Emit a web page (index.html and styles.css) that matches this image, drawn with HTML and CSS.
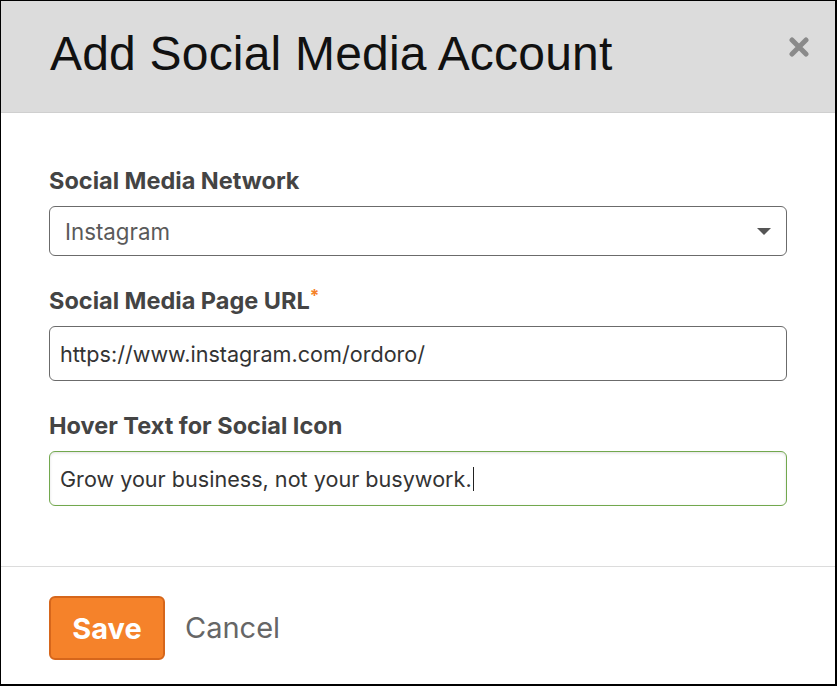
FILE: index.html
```html
<!DOCTYPE html>
<html>
<head>
<meta charset="utf-8">
<link rel="stylesheet" href="styles.css">
</head>
<body>
<div class="modal">
  <div class="modal-header">
    <h1 class="modal-title">Add Social Media Account</h1>
    <span class="close" aria-label="close">
      <svg width="20" height="20" viewBox="0 0 20 20"><path d="M3 3 L17 17 M17 3 L3 17" stroke="#8a8a8a" stroke-width="5" stroke-linecap="round"/></svg>
    </span>
  </div>
  <div class="modal-body">
    <div class="field">
      <label class="label">Social Media Network</label>
      <div class="select">
        <span class="select-value">Instagram</span>
        <span class="caret"></span>
      </div>
    </div>
    <div class="field">
      <label class="label">Social Media Page URL<span class="req">*</span></label>
      <div class="input">https://www.instagram.com/ordoro/</div>
    </div>
    <div class="field">
      <label class="label">Hover Text for Social Icon</label>
      <div class="input focused">Grow your business, not your busywork.<span class="cursor"></span></div>
    </div>
  </div>
  <div class="modal-footer">
    <button class="btn-save">Save</button>
    <span class="btn-cancel">Cancel</span>
  </div>
</div>
</body>
</html>
```
FILE: styles.css
```css
* { box-sizing: border-box; }
html, body { margin: 0; padding: 0; background: #fff; }
body { font-family: Inter, "Liberation Sans", sans-serif; }
.modal {
  width: 837px;
  height: 686px;
  border: 1px solid #000;
  border-right-width: 2px;
  border-bottom-width: 2px;
  display: flex;
  flex-direction: column;
  background: #fff;
}
.modal-header {
  height: 112px;
  background: #dcdcdc;
  border-bottom: 1px solid #cfcfcf;
  display: flex;
  align-items: center;
  justify-content: space-between;
  padding: 0 26px 0 49px;
  flex-shrink: 0;
}
.modal-title {
  margin: 0;
  font-family: "Liberation Sans", Arial, sans-serif;
  font-weight: 400;
  font-size: 48px;
  color: #111;
  letter-spacing: 0.2px;
  position: relative;
  top: -3px;
}
.close { display: flex; position: relative; top: -10px; }
.modal-body {
  flex: 1;
  padding: 54px 48px 0 48px;
  display: flex;
  flex-direction: column;
  gap: 31px;
}
.field { display: flex; flex-direction: column; gap: 11px; }
.label {
  font-size: 23.5px;
  font-weight: 700;
  line-height: 28px;
  color: #444;
}
.req { color: #f5822a; font-size: 17px; vertical-align: top; line-height: 18px; }
.select {
  height: 50px;
  border: 1px solid #6b6b6b;
  border-radius: 6px;
  display: flex;
  align-items: center;
  justify-content: space-between;
  padding: 0 15px 0 15px;
}
.select-value { font-size: 22.3px; color: #5a5a5a; }
.caret {
  width: 0; height: 0;
  border-left: 7px solid transparent;
  border-right: 7px solid transparent;
  border-top: 7px solid #555;
}
.input {
  height: 55px;
  border: 1px solid #6b6b6b;
  border-radius: 6px;
  display: flex;
  align-items: center;
  padding: 0 10px;
  font-size: 21.6px;
  color: #333;
}
.input.focused {
  border-color: #72a84e;
  box-shadow: inset 0 1px 3px rgba(0,0,0,0.12);
}
.cursor { display: inline-block; width: 1px; height: 24px; background: #222; margin-left: 1px; }
.modal-footer {
  height: 118px;
  border-top: 1px solid #dcdcdc;
  display: flex;
  align-items: flex-start;
  gap: 20px;
  padding: 29px 48px 0;
  flex-shrink: 0;
}
.btn-save {
  width: 116px;
  height: 64px;
  background: #f5822a;
  border: 2px solid #d6661b;
  border-radius: 6px;
  color: #fff;
  font-family: Inter, "Liberation Sans", sans-serif;
  font-weight: 700;
  font-size: 29px;
  padding: 0;
}
.btn-cancel { font-size: 29px; color: #666; line-height: 64px; }
```
